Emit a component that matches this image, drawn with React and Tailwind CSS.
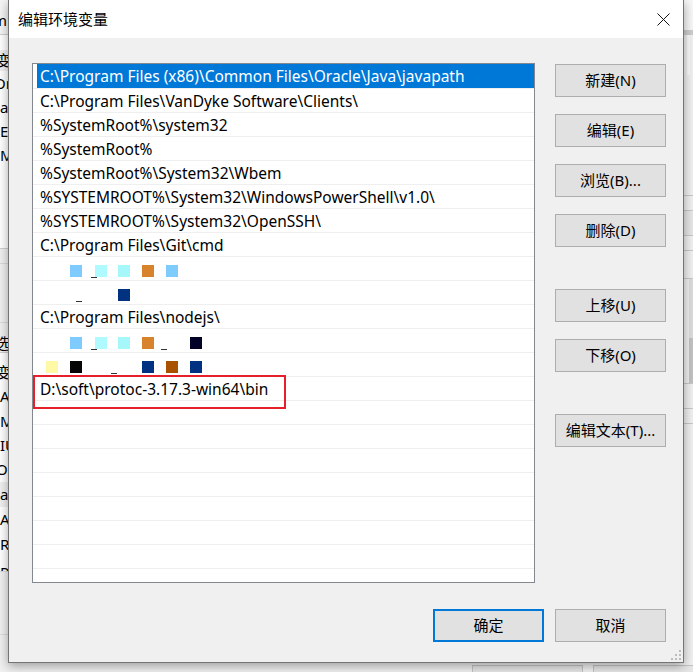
import React from 'react';

const font = "font-['Noto_Sans','Noto_Sans_CJK_SC',sans-serif]";

const paths = [
    'C:\\Program Files (x86)\\Common Files\\Oracle\\Java\\javapath',
    'C:\\Program Files\\VanDyke Software\\Clients\\',
    '%SystemRoot%\\system32',
    '%SystemRoot%',
    '%SystemRoot%\\System32\\Wbem',
    '%SYSTEMROOT%\\System32\\WindowsPowerShell\\v1.0\\',
    '%SYSTEMROOT%\\System32\\OpenSSH\\',
    'C:\\Program Files\\Git\\cmd',
    { blocks: [[37, '#7fcbff'], [62, '#aefaff'], [85, '#a6f7fa'], [109, '#d6832b'], [133, '#7ecbfe']], marks: [58] },
    { blocks: [[85, '#00327f']], marks: [43] },
    'C:\\Program Files\\nodejs\\',
    { blocks: [[37, '#7fcbff'], [62, '#aefaff'], [85, '#a6f7fa'], [109, '#d6832b'], [157, '#020226']], marks: [58, 128] },
    { blocks: [[13, '#fff9a6'], [37, '#050505'], [109, '#013282'], [133, '#a85200'], [157, '#013282']], marks: [78] },
    'D:\\soft\\protoc-3.17.3-win64\\bin',
    '', '', '', '', '', '', '', '',
];

// pixelated (redacted) row, drawn as little coloured squares
const Redacted = ({ blocks, marks }) => (
    <div className="relative h-full">
        {blocks.map(([x, c]) => (
            <span key={x} className="absolute top-[8px] w-[12px] h-[12px]" style={{ left: x, backgroundColor: c }} />
        ))}
        {marks.map((x) => (
            <span key={x} className="absolute top-[20px] w-[6px] h-[1px] bg-[#333]" style={{ left: x }} />
        ))}
    </div>
);

const Btn = ({ children, primary }) => (
    <div
        className={`w-[111px] h-[33px] flex items-center justify-center bg-[#e1e1e1] text-[15px] text-black ${
            primary ? 'border-2 border-[#0078d7]' : 'border border-[#adadad]'
        }`}
    >
        {children}
    </div>
);

// the window behind the dialog, only its right edge shows
const LeftStrip = () => (
    <div className="w-[8px] shrink-0 overflow-hidden bg-white text-[15px] leading-[24px] text-black flex flex-col">
        <div className="h-[35px] bg-[#f5f5f5] border-b border-[#cfcfcf] pt-[8px] -ml-[7px]">m</div>
        <div className="h-[15px]" />
        <div className="h-[21px] leading-[21px] bg-[#f0f0f0] -ml-[4px]">变</div>
        <div className="h-[24px] -ml-[6px]">Or</div>
        <div className="h-[24px]">a</div>
        <div className="h-[24px]">E</div>
        <div className="h-[24px]">M</div>
        <div className="h-[81px]" />
        <div className="h-[15px] border-t border-[#cfcfcf] bg-[#f0f0f0]" />
        <div className="h-[60px] bg-[#f0f0f0] border-t border-[#dadada] border-b border-[#cfcfcf]" />
        <div className="h-[30px] bg-[#f0f0f0] pt-[8px] -ml-[5px] border-b border-[#cfcfcf]">选</div>
        <div className="h-[7px]" />
        <div className="h-[24px] -ml-[4px]">变</div>
        <div className="h-[25px]">A</div>
        <div className="h-[24px]">M</div>
        <div className="h-[24px]">IU</div>
        <div className="h-[25px] -ml-[4px]">OS</div>
        <div className="h-[25px] bg-[#f0f0f0]">a</div>
        <div className="h-[25px]">A</div>
        <div className="h-[25px]">R</div>
        <div className="h-[14px] leading-[30px]">P</div>
        <div className="h-[64px] bg-[#f0f0f0] border-t border-[#dcdcdc] border-b border-[#d0d0d0]" />
        <div className="flex-1 bg-[#f0f0f0]" />
    </div>
);

const RightStrip = () => (
    <div className="w-[9px] shrink-0 overflow-hidden bg-[#f0f0f0] flex flex-col">
        <div className="h-[30px] bg-[#f7f7f7]" />
        <div className="h-[5px] bg-[#cdcdcd]" />
        <div className="h-[40px] flex">
            <div className="w-[3px]" />
            <div className="w-[3px] bg-[#fafafa]" />
        </div>
        <div className="h-[120px]" />
        <div className="h-[15px] border-t border-[#c8c8c8]" />
        <div className="h-[25px] border-t border-[#c8c8c8] bg-[#e6e6e6]" />
        <div className="h-[15px] border-t border-[#c8c8c8]" />
        <div className="h-[28px] border-t border-[#c8c8c8]" />
        <div className="h-[60px] border-t border-[#c8c8c8] flex">
            <div className="w-[5px]" />
            <div className="w-[4px] bg-[#dcdcdc]" />
        </div>
        <div className="h-[45px] flex">
            <div className="w-[5px]" />
            <div className="w-[4px] bg-[#c2c2c2]" />
        </div>
        <div className="h-[25px] border-t border-[#c8c8c8]" />
        <div className="h-[15px] border-t border-[#c8c8c8]" />
        <div className="flex-1 border-t border-[#c8c8c8]" />
    </div>
);

const Grip = () => (
    <div className="absolute right-[2px] bottom-[2px] grid grid-cols-3 gap-[2px]">
        {[0, 0, 1, 0, 1, 1, 1, 1, 1].map((on, i) => (
            <span key={i} className={`w-[2px] h-[2px] ${on ? 'bg-[#bdbdbd]' : ''}`} />
        ))}
    </div>
);

const App = () => {
    return (
        <div className={`w-[693px] h-[672px] overflow-hidden bg-[#f0f0f0] flex flex-col ${font}`}>
            <div className="flex h-[663px]">
                <LeftStrip />

                {/* Dialog */}
                <div className="relative z-10 w-[676px] shrink-0 flex flex-col bg-[#f0f0f0] border border-t-0 border-[#757575] shadow-[0_3px_10px_rgba(0,0,0,0.35)]">
                    <div className="h-[38px] bg-white flex items-center justify-between pl-[9px] pr-[13px]">
                        <span className="text-[15px] text-black">编辑环境变量</span>
                        <svg width="13" height="13" viewBox="0 0 13 13" fill="none" stroke="#111" strokeWidth="1">
                            <path d="M0.5 0.5l12 12M12.5 0.5l-12 12" />
                        </svg>
                    </div>

                    <div className="flex-1 flex flex-col pl-[23px] pr-[17px] pt-[25px]">
                        <div className="flex">
                            {/* Path list */}
                            <div className="relative w-[504px] h-[520px] bg-white border border-[#828790] overflow-hidden">
                                {paths.map((p, i) => (
                                    <div
                                        key={i}
                                        className={`h-[24px] ${i > 0 ? 'border-t border-[#efefef]' : ''}`}
                                    >
                                        {typeof p === 'string' ? (
                                            <div
                                                className={`h-full ml-[4px] pl-[3px] pt-[2px] flex items-center text-[15.5px] whitespace-nowrap ${
                                                    i === 0 ? 'bg-[#0078d7] text-white' : 'text-black'
                                                }`}
                                            >
                                                {p}
                                            </div>
                                        ) : (
                                            <Redacted {...p} />
                                        )}
                                    </div>
                                ))}
                                <div className="absolute left-0 top-[311px] w-[253px] h-[34px] border-2 border-[#e5202a]" />
                            </div>

                            {/* Action buttons */}
                            <div className="ml-[20px] mt-[1px] flex flex-col">
                                <Btn>新建(N)</Btn>
                                <div className="h-[17px]" />
                                <Btn>编辑(E)</Btn>
                                <div className="h-[17px]" />
                                <Btn>浏览(B)...</Btn>
                                <div className="h-[17px]" />
                                <Btn>删除(D)</Btn>
                                <div className="h-[42px]" />
                                <Btn>上移(U)</Btn>
                                <div className="h-[17px]" />
                                <Btn>下移(O)</Btn>
                                <div className="h-[42px]" />
                                <Btn>编辑文本(T)...</Btn>
                            </div>
                        </div>

                        <div className="mt-[26px] flex justify-end gap-[11px]">
                            <Btn primary>确定</Btn>
                            <Btn>取消</Btn>
                        </div>
                    </div>
                    <Grip />
                </div>

                <RightStrip />
            </div>

            {/* window behind, bottom edge */}
            <div className="h-[9px] flex pt-[2px]">
                <div className="w-[472px]" />
                <div className="w-[111px] border border-b-0 border-[#c4c4c4] bg-[#e6e6e6]" />
                <div className="w-[10px]" />
                <div className="flex-1 border border-b-0 border-r-0 border-[#c4c4c4] bg-[#e6e6e6]" />
            </div>
        </div>
    );
};

export default App;
